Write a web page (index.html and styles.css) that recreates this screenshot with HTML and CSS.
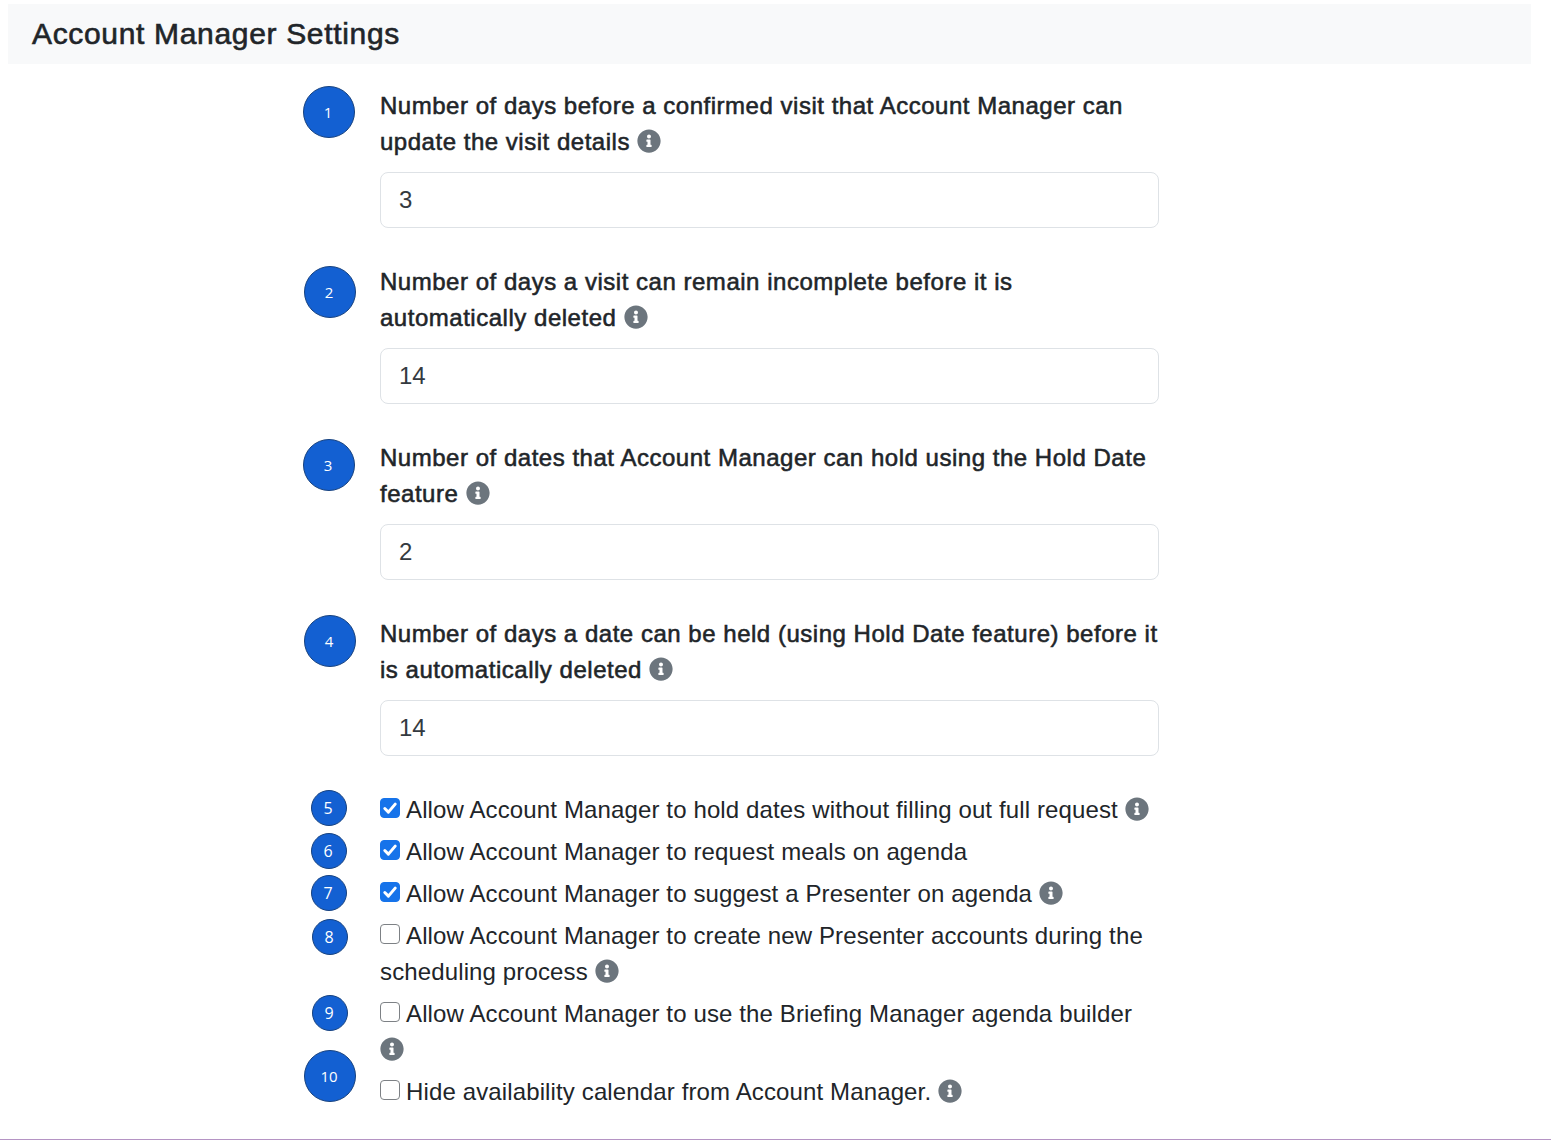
FILE: index.html
```html
<!DOCTYPE html>
<html lang="en">
<head>
<meta charset="utf-8">
<title>Account Manager Settings</title>
<link rel="stylesheet" href="styles.css">
</head>
<body>
<svg class="defs" width="0" height="0" aria-hidden="true"><defs>
<symbol id="info" viewBox="0 0 512 512"><path d="M256 8C119.043 8 8 119.083 8 256c0 136.997 111.043 248 248 248s248-111.003 248-248C504 119.083 392.957 8 256 8zm0 110c23.196 0 42 18.804 42 42s-18.804 42-42 42-42-18.804-42-42 18.804-42 42-42zm56 254c0 6.627-5.373 12-12 12h-88c-6.627 0-12-5.373-12-12v-24c0-6.627 5.373-12 12-12h12v-64h-12c-6.627 0-12-5.373-12-12v-24c0-6.627 5.373-12 12-12h64c6.627 0 12 5.373 12 12v100h12c6.627 0 12 5.373 12 12v24z"/></symbol>
<symbol id="tick" viewBox="0 0 20 20"><path d="M4.8 10.5l3.6 3.6 6.8-8" fill="none" stroke="#fff" stroke-width="3" stroke-linecap="round" stroke-linejoin="round"/></symbol>
</defs></svg>
<header class="title-bar"><h1 class="title">Account Manager Settings</h1></header>
<main class="form">
  <div class="field">
    <label class="field-label">Number of days before a confirmed visit that Account Manager can update the visit details <svg class="info"><use href="#info"/></svg></label>
    <input class="text-input" type="text" value="3">
  </div>
  <div class="field">
    <label class="field-label">Number of days a visit can remain incomplete before it is automatically deleted <svg class="info"><use href="#info"/></svg></label>
    <input class="text-input" type="text" value="14">
  </div>
  <div class="field">
    <label class="field-label">Number of dates that Account Manager can hold using the Hold Date feature <svg class="info"><use href="#info"/></svg></label>
    <input class="text-input" type="text" value="2">
  </div>
  <div class="field">
    <label class="field-label">Number of days a date can be held (using Hold Date feature) before it is automatically deleted <svg class="info"><use href="#info"/></svg></label>
    <input class="text-input" type="text" value="14">
  </div>
  <div class="check"><span class="box is-on"><svg class="tick"><use href="#tick"/></svg></span>Allow Account Manager to hold dates without filling out full request <svg class="info"><use href="#info"/></svg></div>
  <div class="check"><span class="box is-on"><svg class="tick"><use href="#tick"/></svg></span>Allow Account Manager to request meals on agenda</div>
  <div class="check"><span class="box is-on"><svg class="tick"><use href="#tick"/></svg></span>Allow Account Manager to suggest a Presenter on agenda <svg class="info"><use href="#info"/></svg></div>
  <div class="check"><span class="box"></span>Allow Account Manager to create new Presenter accounts during the scheduling process <svg class="info"><use href="#info"/></svg></div>
  <div class="check"><span class="box"></span>Allow Account Manager to use the Briefing Manager agenda builder <svg class="info"><use href="#info"/></svg></div>
  <div class="check"><span class="box"></span>Hide availability calendar from Account Manager. <svg class="info"><use href="#info"/></svg></div>
</main>
<div class="marker big m1">1</div>
<div class="marker big m2">2</div>
<div class="marker big m3">3</div>
<div class="marker big m4">4</div>
<div class="marker small m5">5</div>
<div class="marker small m6">6</div>
<div class="marker small m7">7</div>
<div class="marker small m8">8</div>
<div class="marker small m9">9</div>
<div class="marker big m10">10</div>
<div class="rule"></div>
</body>
</html>
```

FILE: styles.css
```css
* { box-sizing: border-box; }
html, body { margin: 0; height: 1142px; overflow: hidden; background: #fff; }
body {
  position: relative;
  padding: 4px 20px 0 8px;
  font-family: "Liberation Sans", Arial, sans-serif;
  font-size: 24px;
  line-height: 36px;
  color: #212529;
}
.defs { position: absolute; }
.title-bar {
  height: 60px;
  background: #f8f9fa;
  padding: 0 24px;
  display: flex;
  align-items: center;
}
.title {
  margin: 0;
  font-size: 30px;
  line-height: 1;
  font-weight: 400;
  letter-spacing: 0.67px;
  -webkit-text-stroke: 0.6px #212529;
}
.form {
  width: 779px;
  margin: 24px 0 0 372px;
}
.field { margin-bottom: 36px; }
.field-label {
  display: block;
  margin-bottom: 12px;
  letter-spacing: 0.52px;
  -webkit-text-stroke: 0.55px #212529;
}
.text-input {
  display: block;
  width: 100%;
  height: 56px;
  padding: 0 18px;
  border: 1px solid #dee2e6;
  border-radius: 8px;
  background: #fff;
  font: inherit;
  color: #343a40;
}
.info {
  width: 24px;
  height: 24px;
  fill: #6c757d;
  stroke: none;
  vertical-align: -3px;
}
.check { margin-bottom: 6px; letter-spacing: 0.13px; }
.box {
  display: inline-block;
  width: 19.5px;
  height: 20px;
  margin-right: 6.5px;
  border: 1.5px solid #7d8185;
  border-radius: 4px;
  background: #fff;
  vertical-align: 0;
  position: relative;
}
.box.is-on { background: #1673ea; border-color: #1673ea; }
.tick { position: absolute; left: -1.5px; top: -1.5px; width: 20px; height: 20px; }
.marker {
  position: absolute;
  display: flex;
  align-items: center;
  justify-content: center;
  transform: translate(-50%, -50%);
  padding-right: 2px;
  border-radius: 50%;
  background: #1360d2;
  border: 1px solid #17427f;
  color: #fff;
  font-family: "Open Sans", sans-serif;
  line-height: 1;
}
.big { width: 52px; height: 52px; font-size: 15px; }
.small { width: 36px; height: 36px; font-size: 16px; }
.m1 { left: 329px; top: 112px; }
.m2 { left: 330px; top: 292px; }
.m3 { left: 329px; top: 465px; }
.m4 { left: 330px; top: 641px; }
.m5 { left: 329px; top: 808px; }
.m6 { left: 329px; top: 851px; }
.m7 { left: 329px; top: 893px; }
.m8 { left: 330px; top: 937px; }
.m9 { left: 330px; top: 1013px; }
.m10 { left: 330px; top: 1076px; }
.rule {
  position: absolute;
  left: 0;
  right: 0;
  bottom: 2px;
  height: 1px;
  background: #b594c4;
}
```
